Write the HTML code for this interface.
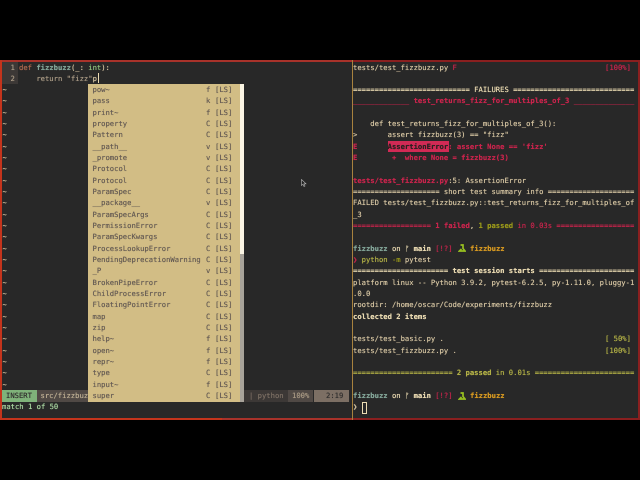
<!DOCTYPE html>
<html><head><meta charset="utf-8"><style>
html,body{margin:0;padding:0;background:#000;width:640px;height:480px;overflow:hidden}
#w{position:absolute;left:0;top:0;width:640px;height:480px;filter:blur(.35px);font:7.2px/11.33px "DejaVu Sans Mono",monospace;text-rendering:geometricPrecision;color:#d5c4a1;white-space:pre;text-shadow:0 0 .4px currentColor}
.b{position:absolute}
.r{position:absolute;height:11.33px;top:calc(61.5px + var(--r)*11.33px)}
.L{left:353px}
.t{left:2.5px;color:#d5c4a1}
.p{left:92.5px;color:#665c54}
.k{left:206px;color:#665c54}
.s{left:215px;color:#665c54}
b{font-weight:bold}
.red{color:#c8244c}.grn{color:#98971a}.yel{color:#d79921}.cy{color:#83a598}.ow{color:#ebdbb2}.ylg{color:#b3b146}
</style></head><body><div id="w">
<div class="b" style="left:0;top:60px;width:640px;height:360px;background:#282828"></div>
<div class="b" style="left:0;top:60px;width:352px;height:1.5px;background:#a8322a"></div>
<div class="b" style="left:352px;top:60px;width:288px;height:1.5px;background:#8a1f1f"></div>
<div class="b" style="left:0;top:60px;width:1.5px;height:360px;background:#c4341c"></div>
<div class="b" style="left:638px;top:60px;width:1.5px;height:360px;background:#8a1f1f"></div>
<div class="b" style="left:0;top:418px;width:222px;height:1.5px;background:#c4341c"></div>
<div class="b" style="left:222px;top:418px;width:130px;height:1.5px;background:#a8322a"></div>
<div class="b" style="left:352px;top:418px;width:288px;height:1.5px;background:#8a1f1f"></div>
<div class="b" style="left:351.5px;top:60px;width:1.2px;height:360px;background:#a8823e"></div>

<div class="b" style="left:2px;top:61.5px;width:16px;height:22.7px;background:#3c3836"></div>
<div class="r" style="--r:0;left:10.5px;color:#a89984">1</div>
<div class="r" style="--r:1;left:10.5px;color:#a89984">2</div>
<div class="r" style="--r:0;left:19px"><span class="red" style="color:#b06a50">def</span> <b class="cy">fizzbuzz</b>(_: <span style="color:#8ec07c">int</span>):</div>
<div class="r" style="--r:1;left:19px">    <span style="color:#a89984">return</span> <span style="color:#a89984">"fizz"</span>p</div>
<div class="b" style="left:97.5px;top:73px;width:.8px;height:10px;background:#ebdbb2"></div>

<div class="r t" style="--r:2">~</div><div class="r t" style="--r:3">~</div><div class="r t" style="--r:4">~</div><div class="r t" style="--r:5">~</div><div class="r t" style="--r:6">~</div><div class="r t" style="--r:7">~</div><div class="r t" style="--r:8">~</div><div class="r t" style="--r:9">~</div><div class="r t" style="--r:10">~</div><div class="r t" style="--r:11">~</div><div class="r t" style="--r:12">~</div><div class="r t" style="--r:13">~</div><div class="r t" style="--r:14">~</div><div class="r t" style="--r:15">~</div><div class="r t" style="--r:16">~</div><div class="r t" style="--r:17">~</div><div class="r t" style="--r:18">~</div><div class="r t" style="--r:19">~</div><div class="r t" style="--r:20">~</div><div class="r t" style="--r:21">~</div><div class="r t" style="--r:22">~</div><div class="r t" style="--r:23">~</div><div class="r t" style="--r:24">~</div><div class="r t" style="--r:25">~</div><div class="r t" style="--r:26">~</div><div class="r t" style="--r:27">~</div><div class="r t" style="--r:28">~</div>

<div class="b" style="left:2px;top:390px;width:35px;height:11.5px;background:#7fb27a"></div>
<div class="r" style="--r:29;left:6px;color:#32302f">INSERT</div>
<div class="b" style="left:37px;top:390px;width:60px;height:11.5px;background:#504945"></div>
<div class="r" style="--r:29;left:40.5px;color:#bdae93">src/fizzbuzz</div>
<div class="b" style="left:244px;top:390px;width:44px;height:11.5px;background:#3c3836"></div>
<div class="r" style="--r:29;left:249px;color:#7c6f64">| python</div>
<div class="b" style="left:288px;top:390px;width:25px;height:11.5px;background:#504945"></div>
<div class="r" style="--r:29;left:292px;color:#a89984">100%</div>
<div class="b" style="left:314px;top:390px;width:34.5px;height:11.5px;background:#7c6f64"></div>
<div class="r" style="--r:29;left:326px;color:#32302f">2:19</div>
<div class="r" style="--r:30;left:2px;color:#a9d6a0">match 1 of 50</div>

<div class="b" style="left:88px;top:84px;width:156px;height:318px;background:#d2bd85"></div>
<div class="b" style="left:240px;top:84px;width:4px;height:170px;background:#fbf5e4"></div>
<div class="b" style="left:240px;top:254px;width:4px;height:148px;background:#a8a39a"></div>

<div class="r p" style="--r:2">pow~</div><div class="r k" style="--r:2">f</div><div class="r s" style="--r:2">[LS]</div>
<div class="r p" style="--r:3">pass</div><div class="r k" style="--r:3">k</div><div class="r s" style="--r:3">[LS]</div>
<div class="r p" style="--r:4">print~</div><div class="r k" style="--r:4">f</div><div class="r s" style="--r:4">[LS]</div>
<div class="r p" style="--r:5">property</div><div class="r k" style="--r:5">C</div><div class="r s" style="--r:5">[LS]</div>
<div class="r p" style="--r:6">Pattern</div><div class="r k" style="--r:6">C</div><div class="r s" style="--r:6">[LS]</div>
<div class="r p" style="--r:7">__path__</div><div class="r k" style="--r:7">v</div><div class="r s" style="--r:7">[LS]</div>
<div class="r p" style="--r:8">_promote</div><div class="r k" style="--r:8">v</div><div class="r s" style="--r:8">[LS]</div>
<div class="r p" style="--r:9">Protocol</div><div class="r k" style="--r:9">C</div><div class="r s" style="--r:9">[LS]</div>
<div class="r p" style="--r:10">Protocol</div><div class="r k" style="--r:10">C</div><div class="r s" style="--r:10">[LS]</div>
<div class="r p" style="--r:11">ParamSpec</div><div class="r k" style="--r:11">C</div><div class="r s" style="--r:11">[LS]</div>
<div class="r p" style="--r:12">__package__</div><div class="r k" style="--r:12">v</div><div class="r s" style="--r:12">[LS]</div>
<div class="r p" style="--r:13">ParamSpecArgs</div><div class="r k" style="--r:13">C</div><div class="r s" style="--r:13">[LS]</div>
<div class="r p" style="--r:14">PermissionError</div><div class="r k" style="--r:14">C</div><div class="r s" style="--r:14">[LS]</div>
<div class="r p" style="--r:15">ParamSpecKwargs</div><div class="r k" style="--r:15">C</div><div class="r s" style="--r:15">[LS]</div>
<div class="r p" style="--r:16">ProcessLookupError</div><div class="r k" style="--r:16">C</div><div class="r s" style="--r:16">[LS]</div>
<div class="r p" style="--r:17">PendingDeprecationWarning</div><div class="r k" style="--r:17">C</div><div class="r s" style="--r:17">[LS]</div>
<div class="r p" style="--r:18">_P</div><div class="r k" style="--r:18">v</div><div class="r s" style="--r:18">[LS]</div>
<div class="r p" style="--r:19">BrokenPipeError</div><div class="r k" style="--r:19">C</div><div class="r s" style="--r:19">[LS]</div>
<div class="r p" style="--r:20">ChildProcessError</div><div class="r k" style="--r:20">C</div><div class="r s" style="--r:20">[LS]</div>
<div class="r p" style="--r:21">FloatingPointError</div><div class="r k" style="--r:21">C</div><div class="r s" style="--r:21">[LS]</div>
<div class="r p" style="--r:22">map</div><div class="r k" style="--r:22">C</div><div class="r s" style="--r:22">[LS]</div>
<div class="r p" style="--r:23">zip</div><div class="r k" style="--r:23">C</div><div class="r s" style="--r:23">[LS]</div>
<div class="r p" style="--r:24">help~</div><div class="r k" style="--r:24">f</div><div class="r s" style="--r:24">[LS]</div>
<div class="r p" style="--r:25">open~</div><div class="r k" style="--r:25">f</div><div class="r s" style="--r:25">[LS]</div>
<div class="r p" style="--r:26">repr~</div><div class="r k" style="--r:26">f</div><div class="r s" style="--r:26">[LS]</div>
<div class="r p" style="--r:27">type</div><div class="r k" style="--r:27">C</div><div class="r s" style="--r:27">[LS]</div>
<div class="r p" style="--r:28">input~</div><div class="r k" style="--r:28">f</div><div class="r s" style="--r:28">[LS]</div>
<div class="r p" style="--r:29">super</div><div class="r k" style="--r:29">C</div><div class="r s" style="--r:29">[LS]</div>

<svg class="b" style="left:301px;top:179px" width="6" height="8" viewBox="0 0 6 8"><path d="M.5.5V6.5L2 5.2 3 7.5 4 7 3 4.8H5Z" fill="#222" stroke="#bbb" stroke-width=".6"/></svg>

<div class="r L" style="--r:0">tests/test_fizzbuzz.py <span class="red">F</span></div>
<div class="r red" style="--r:0;left:605px">[100%]</div>
<div class="r L ow" style="--r:2">=========================== FAILURES ============================</div>
<div class="r L red" style="--r:3">_____________ <b>test_returns_fizz_for_multiples_of_3</b> ______________</div>
<div class="r L" style="--r:5">    def test_returns_fizz_for_multiples_of_3():</div>
<div class="r L" style="--r:6">&gt;       assert fizzbuzz(3) == "fizz"</div>
<div class="b" style="left:388px;top:140.8px;width:60.5px;height:11.4px;background:#d12a55"></div>
<div class="r L red" style="--r:7"><b>E       <span style="color:#2a2020">AssertionError</span>: assert None == 'fizz'</b></div>
<div class="r L red" style="--r:8"><b>E        +  where None = fizzbuzz(3)</b></div>
<div class="r L" style="--r:10"><b class="red">tests/test_fizzbuzz.py</b>:5: AssertionError</div>
<div class="r L" style="--r:11">==================== short test summary info ====================</div>
<div class="r L" style="--r:12">FAILED tests/test_fizzbuzz.py::test_returns_fizz_for_multiples_of</div>
<div class="r L" style="--r:13">_3</div>
<div class="r L red" style="--r:14">================== <b>1 failed</b><span class="ow">, </span><b class="grn">1 passed</b> in 0.03s ==================</div>
<div class="r L" style="--r:16"><b class="cy">fizzbuzz</b> <span class="ow">on</span> <span class="ow">ᚠ</span> <b class="ow">main</b> <span class="red">[!?]</span></div>
<div class="r" style="--r:16;left:470px"><b class="yel">fizzbuzz</b></div>
<svg class="b" style="left:458px;top:244px" width="8" height="9" viewBox="0 0 8 9"><path d="M2.5 1H5V4.5L7 7H1.5L3.5 5" fill="none" stroke="#98c020" stroke-width="1.7"/></svg>
<div class="r L" style="--r:17"><span class="red">❯</span> <span class="ylg">python</span> <span class="grn">-m</span> pytest</div>
<div class="r L ow" style="--r:18">====================== <b>test session starts</b> ======================</div>
<div class="r L" style="--r:19">platform linux -- Python 3.9.2, pytest-6.2.5, py-1.11.0, pluggy-1</div>
<div class="r L" style="--r:20">.0.0</div>
<div class="r L" style="--r:21">rootdir: /home/oscar/Code/experiments/fizzbuzz</div>
<div class="r L ow" style="--r:22"><b>collected 2 items</b></div>
<div class="r L" style="--r:24">tests/test_basic.py .</div>
<div class="r" style="--r:24;left:605px;color:#b3b146">[ 50%]</div>
<div class="r L" style="--r:25">tests/test_fizzbuzz.py .</div>
<div class="r" style="--r:25;left:605px;color:#b3b146">[100%]</div>
<div class="r L ylg" style="--r:27">======================= <b>2 passed</b> in 0.01s =======================</div>
<div class="r L" style="--r:29"><b class="cy">fizzbuzz</b> <span class="ow">on</span> <span class="ow">ᚠ</span> <b class="ow">main</b> <span class="red">[!?]</span></div>
<div class="r" style="--r:29;left:470px"><b class="yel">fizzbuzz</b></div>
<svg class="b" style="left:458px;top:392px" width="8" height="9" viewBox="0 0 8 9"><path d="M2.5 1H5V4.5L7 7H1.5L3.5 5" fill="none" stroke="#98c020" stroke-width="1.7"/></svg>
<div class="r L" style="--r:30">❯</div>
<div class="b" style="left:361.5px;top:402px;width:3.5px;height:10px;border:.8px solid #ebdbb2"></div>
</div></body></html>
